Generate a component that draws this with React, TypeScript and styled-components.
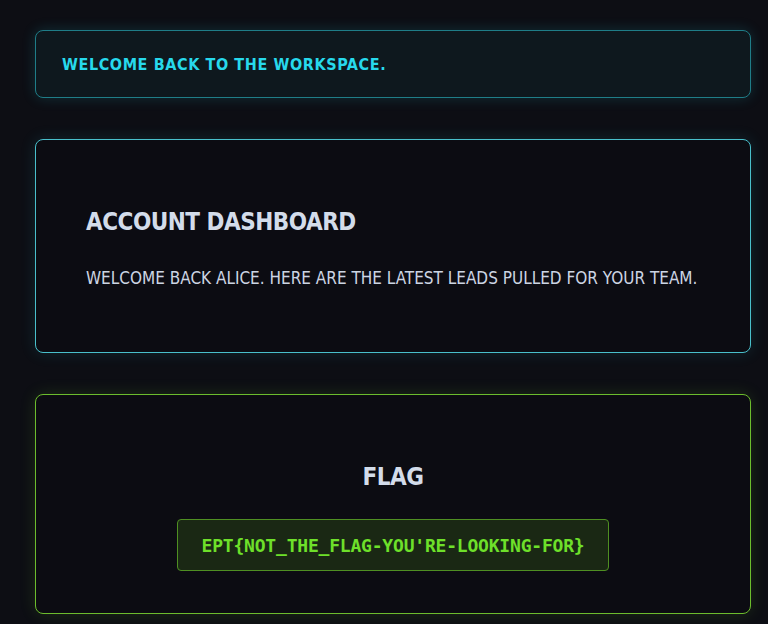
import React from "react";
import styled, { createGlobalStyle } from "styled-components";

const Global = createGlobalStyle`
  html, body { margin: 0; padding: 0; background: #0d0e14; }
  body { font-family: "DejaVu Sans Condensed", "Liberation Sans", sans-serif; }
  * { box-sizing: border-box; }
`;

const Page = styled.div`
  width: 768px;
  min-height: 624px;
  background: #0d0e14;
  padding: 30px 17px 0 35px;
  display: flex;
  flex-direction: column;
  gap: 41px;
`;

const Banner = styled.div`
  height: 68px;
  border: 1px solid #1f7d88;
  border-radius: 8px;
  background: #0e181e;
  box-shadow: 0 0 14px rgba(34, 200, 220, 0.18);
  display: flex;
  align-items: center;
  padding: 0 26px;
  color: #27d9ec;
  font-weight: 700;
  font-size: 16px;
  letter-spacing: 0.6px;
  text-transform: uppercase;
`;

const Card = styled.section<{ $tone: "cyan" | "green" }>`
  border: 1px solid ${(p) => (p.$tone === "cyan" ? "#49bfcb" : "#6cbd2d")};
  border-radius: 8px;
  background: #0c0c12;
  box-shadow: 0 0 16px
    ${(p) => (p.$tone === "cyan" ? "rgba(40, 190, 210, 0.14)" : "rgba(110, 200, 40, 0.16)")};
  display: flex;
  flex-direction: column;
`;

const DashCard = styled(Card)`
  height: 214px;
  padding: 66px 50px 0 50px;
`;

const FlagCard = styled(Card)`
  height: 220px;
  align-items: center;
  padding-top: 66px;
`;

const Heading = styled.h2`
  margin: 0;
  color: #d3dcea;
  font-size: 24px;
  letter-spacing: -0.5px;
  line-height: 32px;
  font-weight: 700;
  text-transform: uppercase;
`;

const Text = styled.p`
  margin: 28px 0 0 0;
  color: #ccd5e3;
  font-size: 17px;
  line-height: 24px;
  white-space: nowrap;
  text-transform: uppercase;
`;

const Code = styled.div`
  margin-top: 26px;
  width: 432px;
  height: 52px;
  border: 1px solid #4f8f22;
  border-radius: 4px;
  background: #1a2814;
  display: flex;
  align-items: center;
  justify-content: center;
  color: #6ee02a;
  font-family: "DejaVu Sans Mono", "Liberation Mono", monospace;
  font-weight: 700;
  font-size: 18px;
  letter-spacing: -0.2px;
`;

export default function App() {
  return (
    <>
      <Global />
      <Page>
        <Banner>Welcome back to the workspace.</Banner>
        <DashCard $tone="cyan">
          <Heading>Account Dashboard</Heading>
          <Text>Welcome back alice. Here are the latest leads pulled for your team.</Text>
        </DashCard>
        <FlagCard $tone="green">
          <Heading>Flag</Heading>
          <Code>EPT{"{"}NOT_THE_FLAG-YOU'RE-LOOKING-FOR{"}"}</Code>
        </FlagCard>
      </Page>
    </>
  );
}
